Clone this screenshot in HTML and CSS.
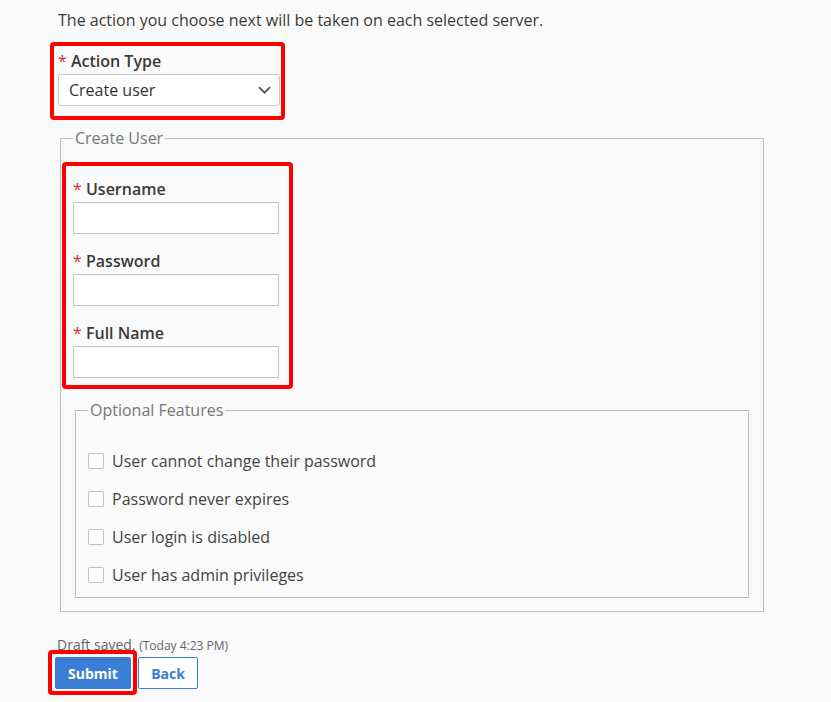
FILE: index.html
```html
<!DOCTYPE html>
<html lang="en">
<head>
<meta charset="utf-8">
<title>Server action</title>
<link rel="stylesheet" href="styles.css">
</head>
<body>
<main class="page">
  <p class="intro">The action you choose next will be taken on each selected server.</p>

  <div class="field field-action highlight hl-action">
    <label class="label" for="action"><span class="req">*</span> Action Type</label>
    <div class="select">
      <span class="select-value">Create user</span>
      <svg class="chevron" width="13" height="8" viewBox="0 0 13 8" aria-hidden="true"><path d="M1 1.2 L6.5 6.7 L12 1.2" fill="none" stroke="#555" stroke-width="1.8"/></svg>
    </div>
  </div>

  <fieldset class="group">
    <legend class="legend">Create User</legend>
    <div class="fields highlight hl-fields">
      <div class="field">
        <label class="label"><span class="req">*</span> Username</label>
        <input class="input" type="text">
      </div>
      <div class="field">
        <label class="label"><span class="req">*</span> Password</label>
        <input class="input" type="password">
      </div>
      <div class="field">
        <label class="label"><span class="req">*</span> Full Name</label>
        <input class="input" type="text">
      </div>
    </div>

    <fieldset class="group inner">
      <legend class="legend">Optional Features</legend>
      <label class="check"><span class="box"></span>User cannot change their password</label>
      <label class="check"><span class="box"></span>Password never expires</label>
      <label class="check"><span class="box"></span>User login is disabled</label>
      <label class="check"><span class="box"></span>User has admin privileges</label>
    </fieldset>
  </fieldset>

  <p class="draft">Draft saved. <small>(Today 4:23 PM)</small></p>
  <div class="actions">
    <span class="btn-wrap highlight hl-submit"><button class="btn btn-primary">Submit</button></span>
    <button class="btn btn-secondary">Back</button>
  </div>
</main>
</body>
</html>
```

FILE: styles.css
```css
* { box-sizing: border-box; }

html, body {
  margin: 0;
  padding: 0;
  background: #fafafa;
}

body {
  font-family: "Open Sans", "Liberation Sans", sans-serif;
  font-size: 16px;
  line-height: 24px;
  color: #333;
}

.page {
  padding: 8px 0 12px 58px;
  width: 831px;
}

.intro {
  margin: 0 0 17px;
  color: #3a3a3a;
}

.highlight { position: relative; }
.highlight::after {
  content: "";
  position: absolute;
  border: 4px solid #f00;
  border-radius: 4px;
  pointer-events: none;
}

.field { display: flex; flex-direction: column; }

.field-action { width: 222px; }
.hl-action::after { top: -7px; left: -8px; right: -5px; bottom: -14px; }

.label {
  font-weight: 600;
  color: #3a3a3a;
  line-height: 24px;
  margin-bottom: 1px;
}
.req { color: #d0312d; font-weight: 400; }

.select {
  height: 32px;
  background: #fff;
  border: 1px solid #c8c8c8;
  border-radius: 3px;
  display: flex;
  align-items: center;
  justify-content: space-between;
  padding: 0 8px 0 10px;
  color: #333;
}
.chevron { display: block; }

.group {
  margin: 20px 0 0 2px;
  width: 704px;
  border: 1px solid #bdbdbd;
  padding: 27px 14px 13px 12px;
  min-width: 0;
}

.legend {
  padding: 0 2px;
  color: #777;
  font-weight: 400;
  line-height: 24px;
}

.fields {
  width: 206px;
  display: flex;
  flex-direction: column;
  gap: 15px;
}
.hl-fields::after { top: -15px; left: -11px; right: -14px; bottom: -11px; }

.input {
  display: block;
  width: 206px;
  height: 32px;
  margin: 0;
  border: 1px solid #c4c4c4;
  border-radius: 0;
  background: #fff;
  font: inherit;
  padding: 0 8px;
}

.inner {
  margin: 20px 0 0 2px;
  width: auto;
  padding: 27px 12px 10px 12px;
  display: flex;
  flex-direction: column;
  gap: 14px;
}

.check {
  display: flex;
  align-items: center;
  gap: 8px;
  color: #444;
  line-height: 24px;
}

.box {
  width: 16px;
  height: 16px;
  border: 1px solid #c2c2c2;
  border-radius: 2px;
  background: #fff;
  flex: none;
}

.draft {
  margin: 23px 0 1px -1px;
  font-size: 14px;
  line-height: 20px;
  color: #666;
}
.draft small { font-size: 12px; }

.actions {
  display: flex;
  gap: 7px;
  margin-left: -3px;
}

.btn-wrap { display: flex; }

.btn {
  height: 32px;
  font-family: inherit;
  font-size: 14px;
  font-weight: 700;
  border-radius: 2px;
  padding: 0;
  cursor: pointer;
}
.btn-primary {
  width: 76px;
  background: #3a7fd5;
  border: 1px solid #3a7fd5;
  color: #fff;
}
.btn-secondary {
  width: 60px;
  background: #fff;
  border: 1px solid #3a7fd5;
  color: #3a7fd5;
}
.hl-submit::after { top: -7px; left: -7px; right: -6px; bottom: -6px; }
```
